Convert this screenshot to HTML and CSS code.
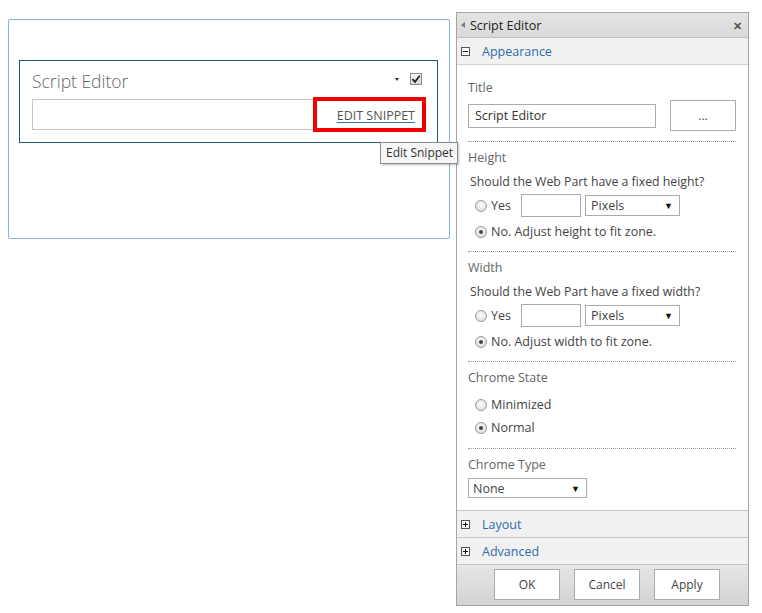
FILE: index.html
```html
<!DOCTYPE html>
<html>
<head>
<meta charset="utf-8">
<link rel="stylesheet" href="styles.css">
</head>
<body>
<div class="page">
  <div class="zone">
    <div class="webpart">
      <div class="wp-head">
        <span class="wp-title">Script Editor</span>
        <span class="wp-tools">
          <span class="wp-menu"></span>
          <span class="wp-check">
            <svg width="10" height="10" viewBox="0 0 10 10"><path d="M1.5 5.2 L4 7.8 L8.8 1.8" fill="none" stroke="#222" stroke-width="1.8"/></svg>
          </span>
        </span>
      </div>
      <div class="wp-body">
        <a class="edit-link">EDIT SNIPPET</a>
        <span class="highlight"></span>
      </div>
    </div>
    <div class="tooltip">Edit Snippet</div>
  </div>

  <div class="panel">
    <div class="panel-head">
      <span class="ph-left"><span class="ph-arrow"></span>Script Editor</span>
      <span class="ph-close">✕</span>
    </div>
    <div class="cat cat-open">
      <span class="toggle">
        <svg width="9" height="9" viewBox="0 0 9 9"><rect x="0.5" y="0.5" width="8" height="8" fill="#fff" stroke="#555"/><path d="M2 4.5 H7" stroke="#111"/></svg>
      </span>
      <span class="cat-name">Appearance</span>
    </div>
    <div class="cat-body">
      <div class="sec sec-title">
        <div class="lbl">Title</div>
        <div class="title-row">
          <div class="textbox title-box">Script Editor</div>
          <div class="btn dots">...</div>
        </div>
      </div>
      <div class="sep"></div>
      <div class="sec sec-size">
        <div class="lbl">Height</div>
        <div class="q">Should the Web Part have a fixed height?</div>
        <div class="opt yes-row">
          <span class="radio"></span><span class="opt-t">Yes</span>
          <span class="textbox num"></span>
          <span class="select px"><span>Pixels</span><span class="caret">▼</span></span>
        </div>
        <div class="opt no-row"><span class="radio on"></span><span class="opt-t">No. Adjust height to fit zone.</span></div>
      </div>
      <div class="sep"></div>
      <div class="sec sec-size">
        <div class="lbl">Width</div>
        <div class="q">Should the Web Part have a fixed width?</div>
        <div class="opt yes-row">
          <span class="radio"></span><span class="opt-t">Yes</span>
          <span class="textbox num"></span>
          <span class="select px"><span>Pixels</span><span class="caret">▼</span></span>
        </div>
        <div class="opt no-row"><span class="radio on"></span><span class="opt-t">No. Adjust width to fit zone.</span></div>
      </div>
      <div class="sep"></div>
      <div class="sec sec-state">
        <div class="lbl">Chrome State</div>
        <div class="opt state first"><span class="radio"></span><span class="opt-t">Minimized</span></div>
        <div class="opt state"><span class="radio on"></span><span class="opt-t">Normal</span></div>
      </div>
      <div class="sep"></div>
      <div class="sec">
        <div class="lbl">Chrome Type</div>
        <div class="select ctype"><span>None</span><span class="caret">▼</span></div>
      </div>
    </div>
    <div class="cat">
      <span class="toggle">
        <svg width="9" height="9" viewBox="0 0 9 9"><rect x="0.5" y="0.5" width="8" height="8" fill="#fff" stroke="#555"/><path d="M2 4.5 H7 M4.5 2 V7" stroke="#111"/></svg>
      </span>
      <span class="cat-name">Layout</span>
    </div>
    <div class="cat">
      <span class="toggle">
        <svg width="9" height="9" viewBox="0 0 9 9"><rect x="0.5" y="0.5" width="8" height="8" fill="#fff" stroke="#555"/><path d="M2 4.5 H7 M4.5 2 V7" stroke="#111"/></svg>
      </span>
      <span class="cat-name">Advanced</span>
    </div>
    <div class="actions">
      <div class="btn act">OK</div>
      <div class="btn act">Cancel</div>
      <div class="btn act">Apply</div>
    </div>
  </div>
</div>
</body>
</html>
```

FILE: styles.css
```css
* { box-sizing: border-box; }
html, body { margin: 0; padding: 0; background: #fff; }
body {
  font-family: "Open Sans", "Noto Sans", sans-serif;
  font-size: 12px;
  color: #444;
}
.page {
  display: flex;
  align-items: flex-start;
}
.zone {
  position: relative;
  margin: 19px 0 0 8px;
  width: 442px;
  height: 220px;
  border: 1px solid #8fb0dc;
  border-radius: 2px;
  padding: 40px 11px 0 10px;
  background: #fff;
}
.webpart {
  position: relative;
  border: 1px solid #205a79;
  height: 83px;
  padding: 0 12px 0 12px;
}
.wp-head {
  display: flex;
  justify-content: space-between;
  align-items: center;
  height: 37px;
}
.wp-title {
  font-size: 17.5px;
  font-weight: 300;
  color: #666;
  margin-top: 3px;
}
.wp-tools {
  display: flex;
  align-items: center;
  gap: 11px;
  margin-right: 3px;
  margin-top: -1px;
}
.wp-menu {
  width: 0; height: 0;
  border-left: 2.5px solid transparent;
  border-right: 2.5px solid transparent;
  border-top: 3px solid #333;
}
.wp-check {
  width: 12px; height: 12px;
  border: 1px solid #8a8a8a;
  background: linear-gradient(#f4f4f4, #d8d8d8);
  display: flex; align-items: center; justify-content: center;
}
.wp-body {
  position: relative;
  height: 31px;
  border: 1px solid #c6c6c6;
  display: flex;
  justify-content: flex-end;
  align-items: center;
  padding-right: 9px;
  margin-top: 1px;
}
.edit-link {
  font-size: 12.5px;
  color: #555;
  text-decoration: underline;
  text-decoration-color: #3a6f9a;
  text-underline-offset: 2px;
  margin-top: 2px;
}
.highlight {
  position: absolute;
  right: -2px;
  top: -3px;
  width: 113px;
  height: 35px;
  border: 4px solid #f20000;
}
.tooltip {
  position: absolute;
  left: 371px;
  top: 122px;
  padding: 1px 4px 2px 5px;
  border: 1px solid #8c8c8c;
  background: #f6f6f6;
  box-shadow: 1px 1px 2px rgba(0,0,0,0.25);
  font-size: 12px;
  color: #333;
  white-space: nowrap;
  z-index: 2;
}

.panel {
  margin: 12px 0 0 6px;
  width: 293px;
  height: 594px;
  border: 1px solid #a5a5a5;
  background: #fff;
  display: flex;
  flex-direction: column;
}
.panel-head {
  height: 25px;
  background: linear-gradient(#e4e4e4, #d9d9d9);
  border-bottom: 1px solid #c2c2c2;
  display: flex;
  justify-content: space-between;
  align-items: center;
  padding: 0 6px 0 4px;
  font-size: 12.5px;
  color: #222;
}
.ph-left { display: flex; align-items: center; }
.ph-arrow {
  width: 0; height: 0;
  border-top: 3px solid transparent;
  border-bottom: 3px solid transparent;
  border-right: 4px solid #777;
  margin-right: 5px;
}
.ph-close { font-size: 11px; color: #555; font-weight: bold; }
.cat {
  height: 27px;
  flex: none;
  background: #f1f1f1;
  border-bottom: 1px solid #c6c6c6;
  display: flex;
  align-items: center;
  padding-left: 4px;
}
.cat-open { border-bottom: 1px solid #d0d0d0; }
.toggle { display: flex; width: 9px; height: 9px; margin-right: 12px; }
.cat-name { color: #2f6bb0; font-size: 12.5px; }
.cat-body {
  flex: none;
  padding: 0 12px 0 11px;
  border-bottom: 1px solid #c6c6c6;
  height: 446px;
}
.sec { padding-top: 7px; padding-bottom: 9px; }
.sec-title { padding-top: 14px; padding-bottom: 10px; }
.sec-size { padding-bottom: 8px; }
.sec-state { padding-bottom: 9px; }
.lbl { color: #666; font-size: 12.5px; line-height: 17px; }
.title-row {
  display: flex;
  justify-content: space-between;
  align-items: center;
  margin-top: 4px;
}
.textbox {
  border: 1px solid #ababab;
  background: #fff;
}
.title-box {
  width: 188px;
  height: 24px;
  padding: 2px 6px;
  color: #333;
  font-size: 12.5px;
  line-height: 18px;
}
.btn {
  border: 1px solid #ababab;
  background: #fff;
  display: flex;
  align-items: center;
  justify-content: center;
  color: #444;
  font-size: 12px;
}
.dots { width: 66px; height: 31px; }
.sep { border-top: 1px dotted #8a9bb0; }
.q {
  margin: 7px 0 0 2px;
  font-size: 12.3px;
  color: #444;
  line-height: 17px;
}
.opt {
  display: flex;
  align-items: center;
  height: 23px;
  margin-left: 7px;
  color: #444;
  font-size: 12.5px;
}
.yes-row { height: 25px; margin-top: 3px; }
.no-row { margin-top: 2px; }
.radio {
  width: 12px; height: 12px;
  border-radius: 50%;
  border: 1px solid #9a9a9a;
  background: radial-gradient(circle at 50% 40%, #fdfdfd, #d6d6d6);
  margin-right: 4px;
  position: relative;
  flex: none;
}
.radio.on::after {
  content: "";
  position: absolute;
  left: 3px; top: 3px;
  width: 4px; height: 4px;
  border-radius: 50%;
  background: #444;
}
.num { width: 60px; height: 23px; margin-left: 10px; }
.select {
  border: 1px solid #ababab;
  background: #fff;
  display: flex;
  justify-content: space-between;
  align-items: center;
  padding: 0 6px 0 5px;
  color: #444;
  font-size: 12.5px;
}
.px { width: 95px; height: 21px; margin-left: 4px; }
.caret { font-size: 9px; color: #111; }
.state { height: 23px; }
.state.first { margin-top: 7px; }
.ctype { width: 119px; height: 20px; margin-top: 5px; padding-left: 4px; }
.actions {
  flex: 1;
  display: flex;
  justify-content: flex-start;
  align-items: center;
  gap: 14px;
  padding-left: 37px;
  background: linear-gradient(#e6e6e6, #d4d4d4);
  padding-bottom: 1px;
}
.act { width: 66px; height: 31px; }
```
